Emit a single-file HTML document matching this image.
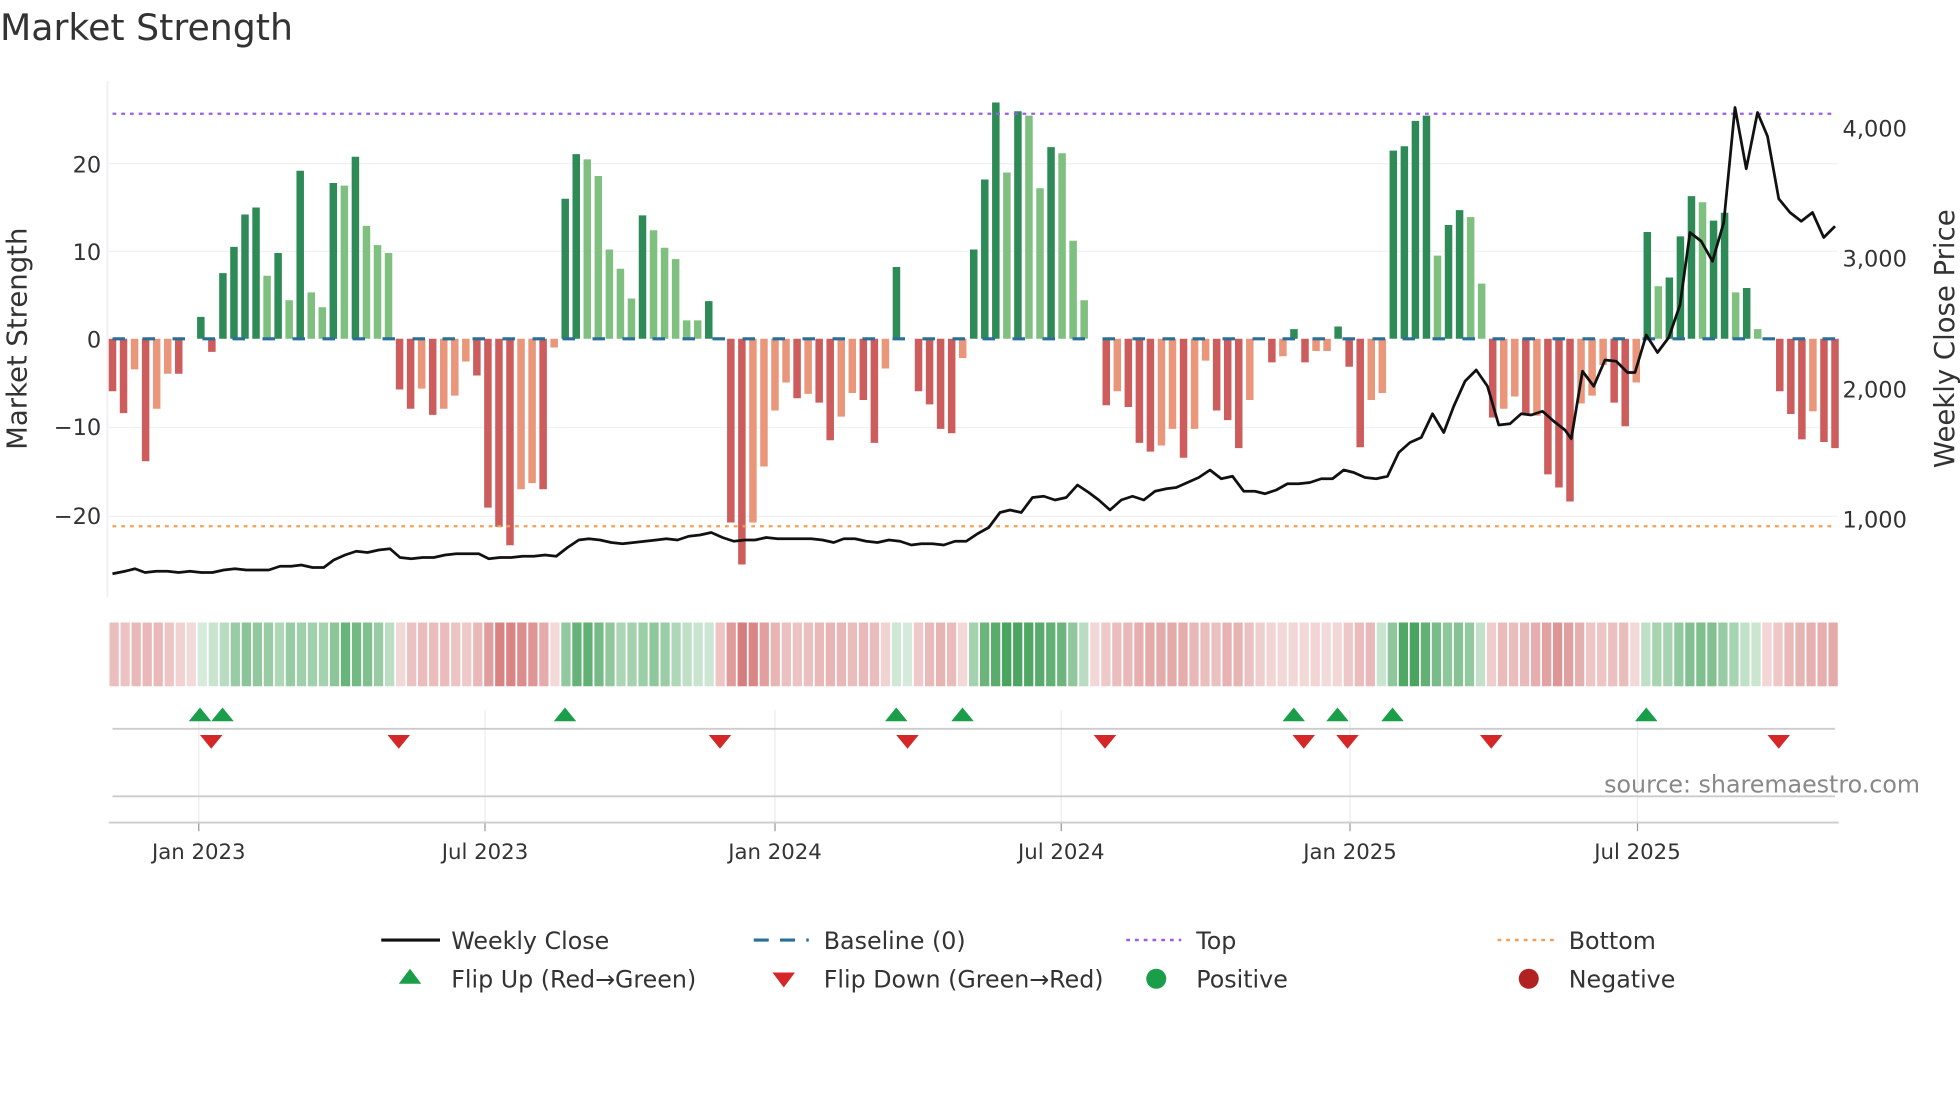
<!DOCTYPE html>
<html><head><meta charset="utf-8"><style>
html,body{margin:0;padding:0;background:#fff;}
svg{display:block;font-family:"DejaVu Sans","Liberation Sans",sans-serif;}
</style></head><body>
<svg id="s" width="1960" height="1102" viewBox="0 0 1568 881.6" xmlns="http://www.w3.org/2000/svg">
<rect width="1568" height="882" fill="#fff"/>
<text x="0" y="32" font-size="29" fill="#333">Market Strength</text>
<g id="grid" stroke="#eef1f5" stroke-width="1"></g>
<line x1="86" y1="65" x2="86" y2="478" stroke="#eef1f5" stroke-width="1.5"/>
<g id="bars"></g>
<line x1="90" y1="271" x2="1468" y2="271" stroke="#2a6f97" stroke-width="2.5" stroke-dasharray="10,14"/>
<line x1="90" y1="91" x2="1468" y2="91" stroke="#9b5de5" stroke-width="1.8" stroke-dasharray="3,4"/>
<line x1="90" y1="421" x2="1468" y2="421" stroke="#f0a05a" stroke-width="1.8" stroke-dasharray="3,4"/>
<polyline id="price" fill="none" stroke="#111" stroke-width="2.2" stroke-linejoin="round"/>
<g font-size="18" fill="#333" text-anchor="end">
<text x="81" y="138">20</text><text x="81" y="208">10</text><text x="81" y="278">0</text>
<text x="81" y="348">−10</text><text x="81" y="419">−20</text></g>
<g font-size="18" fill="#333">
<text x="1474" y="109">4,000</text><text x="1474" y="213">3,000</text><text x="1474" y="318">2,000</text><text x="1474" y="422">1,000</text></g>
<text transform="translate(21,271) rotate(-90)" font-size="22" fill="#333" text-anchor="middle">Market Strength</text>
<text transform="translate(1563,271) rotate(-90)" font-size="22" fill="#333" text-anchor="middle">Weekly Close Price</text>
<g id="heat"></g>
<g id="vgrid" stroke="#e8ecf0" stroke-width="1"></g>
<line x1="90" y1="583" x2="1468" y2="583" stroke="#ccc" stroke-width="1.5"/>
<line x1="90" y1="637" x2="1468" y2="637" stroke="#ccc" stroke-width="1.5"/>
<line x1="87" y1="658" x2="1471" y2="658" stroke="#ccc" stroke-width="1.5"/>
<g id="marks"></g>
<text x="1536" y="634" font-size="19" fill="#888" text-anchor="end">source: sharemaestro.com</text>
<g id="ticks" font-size="17" fill="#333" text-anchor="middle"></g>
<g font-size="19" fill="#333">
<line x1="305" y1="752" x2="352" y2="752" stroke="#111" stroke-width="2.5"/>
<text x="361" y="759">Weekly Close</text>
<line x1="603" y1="752" x2="647" y2="752" stroke="#2a6f97" stroke-width="2.5" stroke-dasharray="12,9"/>
<text x="659" y="759">Baseline (0)</text>
<line x1="901" y1="752" x2="945" y2="752" stroke="#9b5de5" stroke-width="2" stroke-dasharray="3,4"/>
<text x="957" y="759">Top</text>
<line x1="1198" y1="752" x2="1243" y2="752" stroke="#f0a05a" stroke-width="2" stroke-dasharray="3,4"/>
<text x="1255" y="759">Bottom</text>
<polygon points="319,787 337,787 328,775" fill="#1a9e4a"/>
<text x="361" y="790">Flip Up (Red→Green)</text>
<polygon points="618,778 636,778 627,790" fill="#d62728"/>
<text x="659" y="790">Flip Down (Green→Red)</text>
<circle cx="925" cy="783" r="8" fill="#1a9e4a"/>
<text x="957" y="790">Positive</text>
<circle cx="1223" cy="783" r="8" fill="#b22222"/>
<text x="1255" y="790">Negative</text>
</g>
</svg>
<script>
var NS="http://www.w3.org/2000/svg";
function el(p,t,a){var e=document.createElementNS(NS,t);for(var k in a)e.setAttribute(k,a[k]);document.getElementById(p).appendChild(e);return e;}
var d=[[-6,1],[-8.5,1],[-3.5,0],[-14,1],[-8,0],[-4,0],[-4,1],[0,0],[2.5,1],[-1.5,1],[7.5,1],[10.5,1],[14.2,1],[15,1],[7.2,0],[9.8,1],[4.4,0],[19.2,1],[5.3,0],[3.6,0],[17.8,1],[17.5,0],[20.8,1],[12.9,0],[10.7,0],[9.8,0],
[-5.8,1],[-8,1],[-5.7,0],[-8.7,1],[-8,0],[-6.5,0],[-2.6,0],[-4.2,1],[-19.3,1],[-21.5,1],[-23.6,1],[-17.2,0],[-16.5,0],[-17.2,1],[-1,0],
[16,1],[21.1,1],[20.5,0],[18.6,0],[10.2,0],[8,0],[4.6,0],[14.1,1],[12.4,0],[10.4,0],[9.1,0],[2.1,0],[2.1,0],[4.3,1],[0,0],
[-21,1],[-25.8,1],[-21,0],[-14.6,0],[-8.2,0],[-5,0],[-6.8,1],[-6.3,0],[-7.3,1],[-11.6,1],[-8.9,0],[-6.2,0],[-7,1],[-11.9,1],[-3.4,0],[8.2,1],[0,0],
[-6,1],[-7.5,1],[-10.3,1],[-10.8,1],[-2.2,0],[10.2,1],[18.2,1],[27,1],[19,0],[26,1],[25.5,0],[17.2,0],[21.9,1],[21.2,0],[11.2,0],[4.4,0],[0,0],
[-7.6,1],[-6,0],[-7.8,1],[-11.9,1],[-12.9,1],[-12.2,0],[-10.3,0],[-13.6,1],[-10.3,0],[-2.5,0],[-8.2,1],[-9.3,1],[-12.5,1],[-7,0],[0,0],[-2.7,1],[-2,0],[1.1,1],[-2.7,1],[-1.4,0],[-1.4,0],[1.4,1],[-3.2,1],[-12.4,1],[-7,0],[-6.2,0],
[21.5,1],[22,1],[24.9,1],[25.5,1],[9.5,0],[13,1],[14.7,1],[13.9,0],[6.3,0],
[-9,1],[-8,0],[-6.6,0],[-8.6,1],[-8.8,0],[-15.5,1],[-17,1],[-18.6,1],[-7.4,0],[-6.5,0],[-3,0],[-7.3,1],[-10,1],[-5,0],
[12.2,1],[6,0],[7,1],[11.7,1],[16.3,1],[15.6,0],[13.5,1],[14.4,1],[5.3,0],[5.8,1],[1.1,0],[0,0],
[-6,1],[-8.6,1],[-11.5,1],[-8.3,0],[-11.8,1],[-12.5,1]];
var n=d.length,sp=(1468-90)/(n-1),bw=6;
[131,201,342,413].forEach(function(y){el("grid","line",{x1:87,y1:y,x2:1470,y2:y});});
for(var i=0;i<n;i++){var v=d[i][0],x=90+sp*i;if(v==0)continue;
var c=v>0?(d[i][1]?"#2e8b57":"#7fbf7f"):(d[i][1]?"#cd5c5c":"#e9967a");
var y=271-7*v;el("bars","rect",{x:x-bw/2,y:Math.min(y,271),width:bw,height:Math.abs(271-y),fill:c});}
var hw=(1471-87)/n;
for(var i=0;i<n;i++){var s=0,c=0;for(var j=i-1;j<=i+1;j++)if(j>=0&&j<n){s+=d[j][0];c++;}s/=c;
var a=Math.min(1,0.18+Math.abs(s)/28*0.8);var col=s>=0?"rgba(45,150,70,"+a+")":"rgba(200,80,80,"+(0.2+Math.abs(s)/25*0.6)+")";
el("heat","rect",{x:87+hw*i+0.6,y:498,width:hw-1.4,height:51,fill:col});}
var P=[[90,459],[100,457],[108,455],[116,458],[125,457],[134,457],[143,458],[152,457],[161,458],[170,458],[179,456],[188,455],[197,456],[206,456],[215,456],[224,453],[233,453],[241,452],[250,454],[259,454],[267,448],[276,444],[285,441],[294,442],[303,440],[312,439],[320,446],[329,447],[338,446],[347,446],[356,444],[365,443],[374,443],[383,443],[391,447],[400,446],[409,446],[418,445],[427,445],[436,444],[445,445],[454,438],[463,432],[471,431],[480,432],[489,434],[498,435],[507,434],[516,433],[525,432],[533,431],[542,432],[551,429],[560,428],[569,426],[578,430],[587,433],[596,432],[604,432],[613,430],[622,431],[631,431],[640,431],[649,431],[658,432],[667,434],[675,431],[684,431],[693,433],[702,434],[711,432],[720,433],[729,436],[737,435],[746,435],[755,436],[764,433],[773,433],[782,427],[791,422],[800,410],[808,408],[817,410],[826,398],[835,397],[844,400],[853,398],[862,388],[871,394],[879,400],[888,408],[897,400],[906,397],[915,400],[924,393],[933,391],[941,390],[950,386],[959,382],[968,376],[977,383],[986,381],[995,393],[1004,393],[1012,395],[1021,392],[1030,387],[1039,387],[1048,386],[1057,383],[1066,383],[1075,376],[1083,378],[1092,382],[1101,383],[1110,381],[1119,362],[1128,354],[1137,350],[1146,331],[1155,346],[1163,325],[1172,305],[1181,296],[1190,309],[1199,340],[1208,339],[1217,331],[1225,332],[1234,329],[1243,337],[1252,344],[1257,351],[1266,297],[1275,309],[1284,288],[1293,289],[1302,298],[1308,298],[1317,268],[1326,282],[1335,270],[1344,244],[1352,186],[1361,193],[1370,209],[1379,178],[1388,86],[1397,135],[1406,90],[1414,109],[1423,159],[1432,170],[1441,177],[1450,170],[1459,190],[1468,181]];
document.getElementById("price").setAttribute("points",P.map(function(p){return p.join(",")}).join(" "));
var T=[[159,"Jan 2023"],[388,"Jul 2023"],[620,"Jan 2024"],[849,"Jul 2024"],[1080,"Jan 2025"],[1310,"Jul 2025"]];
T.forEach(function(t){el("vgrid","line",{x1:t[0],y1:568,x2:t[0],y2:658});
el("vgrid","line",{x1:t[0],y1:658,x2:t[0],y2:665,stroke:"#999"});
var e=el("ticks","text",{x:t[0],y:687});e.textContent=t[1];});
[160,178,452,717,770,1035,1070,1114,1317].forEach(function(x){el("marks","polygon",{points:(x-9)+",577 "+(x+9)+",577 "+x+",566",fill:"#1a9e4a"});});
[169,319,576,726,884,1043,1078,1193,1423].forEach(function(x){el("marks","polygon",{points:(x-9)+",588 "+(x+9)+",588 "+x+",599",fill:"#d62728"});});
</script>
</body></html>
